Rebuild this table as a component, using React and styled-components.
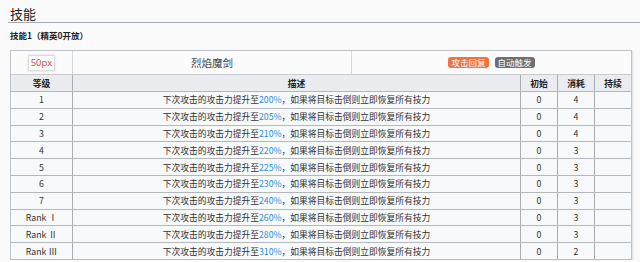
import React from 'react'
import styled, { createGlobalStyle } from 'styled-components'

const GlobalStyle = createGlobalStyle`
body{
  margin:0;
  background:#fafafa;
  font-family:"Noto Sans CJK SC","Noto Sans",sans-serif;
  color:#333;
}
`

const levels = [
  { lv: '1', pct: '200%', init: 0, cost: 4 },
  { lv: '2', pct: '205%', init: 0, cost: 4 },
  { lv: '3', pct: '210%', init: 0, cost: 4 },
  { lv: '4', pct: '220%', init: 0, cost: 3 },
  { lv: '5', pct: '225%', init: 0, cost: 3 },
  { lv: '6', pct: '230%', init: 0, cost: 3 },
  { lv: '7', pct: '240%', init: 0, cost: 3 },
  { lv: 'Rank Ⅰ', pct: '260%', init: 0, cost: 3 },
  { lv: 'Rank Ⅱ', pct: '280%', init: 0, cost: 3 },
  { lv: 'Rank Ⅲ', pct: '310%', init: 0, cost: 2 },
]

const App = () => {
  return (
    <Page>
      <GlobalStyle />
      <Heading>技能</Heading>
      <SubHeading>技能1（精英0开放）</SubHeading>
      <Table>
        <NameRow>
          <Cell>
            <Placeholder>50px</Placeholder>
          </Cell>
          <NameCell>烈焰魔剑</NameCell>
          <TagCell>
            <Tag $bg="#f0733f">攻击回复</Tag>
            <Tag $bg="#6f6f6f">自动触发</Tag>
          </TagCell>
        </NameRow>
        <Row $head>
          <HeadCell>等级</HeadCell>
          <HeadCell>描述</HeadCell>
          <HeadCell>初始</HeadCell>
          <HeadCell>消耗</HeadCell>
          <HeadCell>持续</HeadCell>
        </Row>
        {levels.map((l, i) => (
          <Row key={i} $last={i === levels.length - 1}>
            <Cell>{l.lv}</Cell>
            <Cell>
              下次攻击的攻击力提升至<Pct>{l.pct}</Pct>，如果将目标击倒则立即恢复所有技力
            </Cell>
            <Cell>{l.init}</Cell>
            <Cell>{l.cost}</Cell>
            <Cell></Cell>
          </Row>
        ))}
      </Table>
    </Page>
  )
}

const Page = styled.div`
padding:6px 0 0 0;
`

const Heading = styled.h2`
margin:0 0 0 8px;
padding:0 0 1px 2px;
font-size:13px;
line-height:15px;
font-weight:400;
color:#222;
border-bottom:1px solid #a2a9b1;
`

const SubHeading = styled.h3`
margin:6px 0 0 10px;
font-size:8.5px;
line-height:12px;
font-weight:700;
color:#222;
`

const Table = styled.div`
margin:9px 0 0 10px;
width:620px;
border:1px solid #c0c4c8;
border-bottom:none;
background:#f8f9fa;
box-shadow:1px 1px 2px rgba(0,0,0,.12);
`

const NameRow = styled.div`
display:grid;
grid-template-columns:62px 1fr 1fr;
height:23px;
background:#fbfbfb;
border-bottom:1px solid #c8ccd1;
& > div{border-right:1px solid #d4d7db;}
& > div:last-child{border-right:none;}
`

const Row = styled.div`
display:grid;
grid-template-columns:62px 1fr 37px 37px 36px;
height:${p => (p.$head ? '16px' : '15.8px')};
background:${p => (p.$head ? '#eaecf0' : '#f8f9fa')};
border-bottom:1px solid ${p => (p.$last ? '#b8bcc0' : '#b4b8bd')};
& > div{border-right:1px solid #a9aeb4;}
& > div:last-child{border-right:none;}
`

const Cell = styled.div`
display:flex;
align-items:center;
justify-content:center;
font-size:8.75px;
color:#333;
white-space:nowrap;
`

const HeadCell = styled(Cell)`
font-weight:700;
color:#222;
`

const NameCell = styled(Cell)`
font-size:10.5px;
color:#444;
`

const TagCell = styled(Cell)`
gap:6px;
`

const Placeholder = styled.span`
display:inline-block;
padding:1px 2px;
background:#fff;
border:1px solid #ddd;
box-shadow:0 0 2px rgba(0,0,0,.15);
color:#c9443c;
font-family:"Open Sans","Noto Sans",sans-serif;
font-size:9.5px;
line-height:12px;
`

const Tag = styled.span`
display:inline-block;
padding:0 3px;
border-radius:3px;
background:${p => p.$bg};
color:#fff;
font-size:8.5px;
line-height:11px;
`

const Pct = styled.span`
color:#2f8fd8;
`

export default App
